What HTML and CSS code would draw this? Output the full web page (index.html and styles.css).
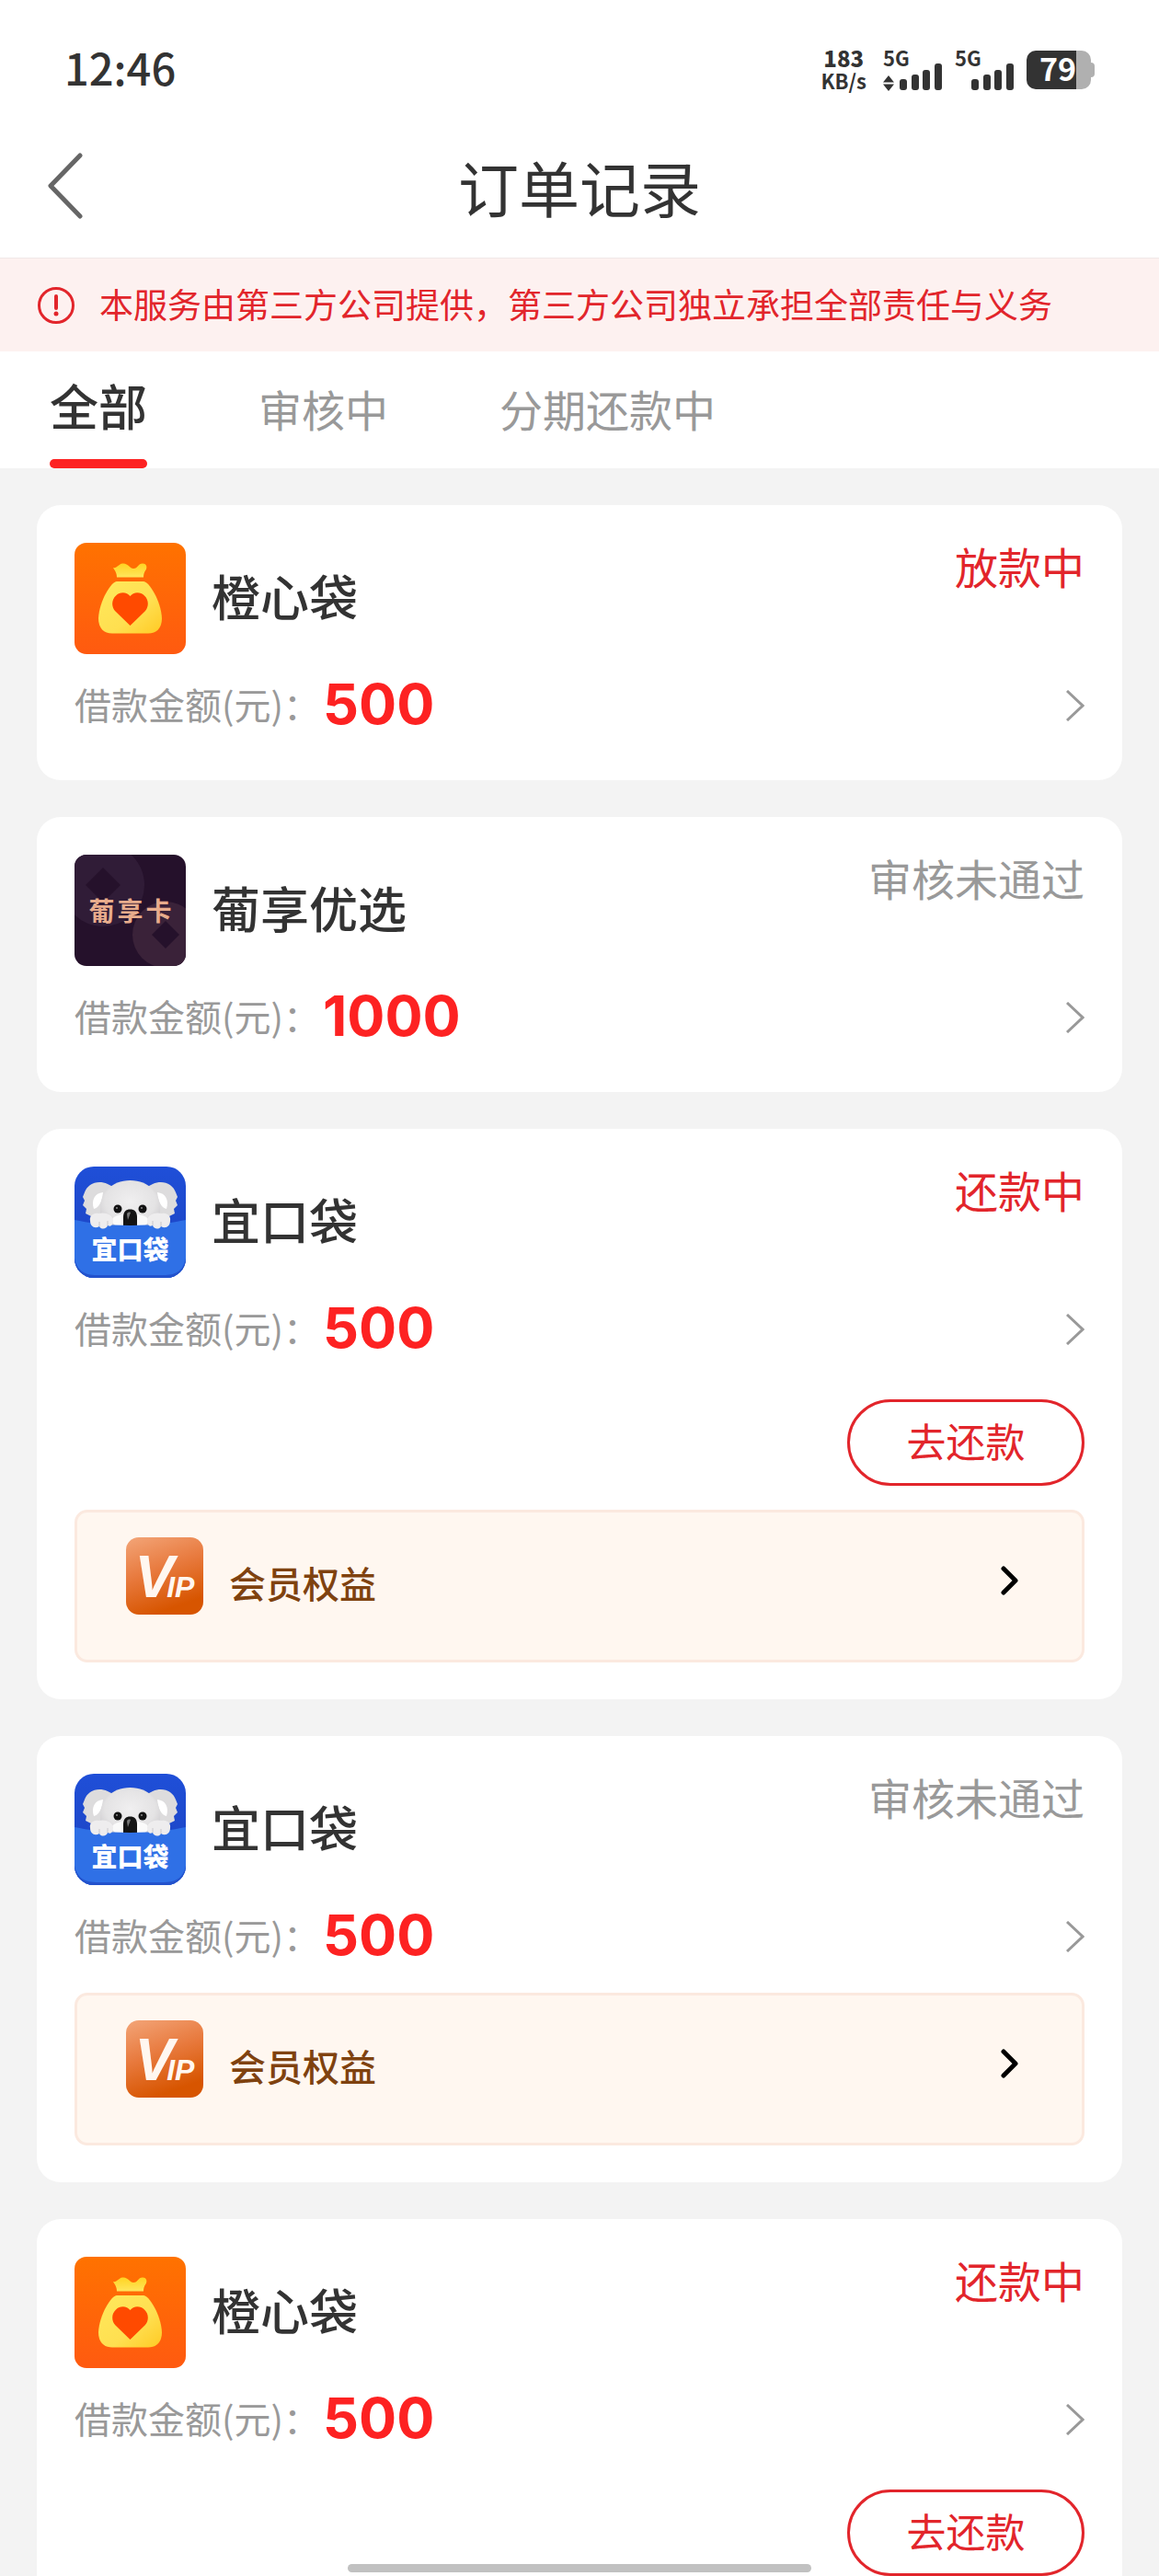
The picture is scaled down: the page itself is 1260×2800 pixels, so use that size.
FILE: index.html
```html
<!DOCTYPE html>
<html lang="zh-CN">
<head>
    <meta charset="UTF-8">
    <meta name="viewport" content="width=device-width, initial-scale=1.0">
    <title>订单记录</title>
    <link rel="stylesheet" href="styles.css">
</head>
<body>

<!-- 图标定义 -->
<svg class="defs" width="0" height="0" aria-hidden="true">
    <defs>
        <linearGradient id="orange-bg" x1="0" y1="0" x2="0" y2="1">
            <stop offset="0" stop-color="#ff7200"/>
            <stop offset="1" stop-color="#ff5a10"/>
        </linearGradient>
        <linearGradient id="bag" x1="0" y1="0" x2="1" y2="1">
            <stop offset="0" stop-color="#ffe95c"/>
            <stop offset="0.6" stop-color="#ffdf50"/>
            <stop offset="1" stop-color="#ffca24"/>
        </linearGradient>
        <linearGradient id="neck" x1="0" y1="0" x2="0" y2="1">
            <stop offset="0" stop-color="#ffd321"/>
            <stop offset="1" stop-color="#ffe65c"/>
        </linearGradient>
        <linearGradient id="vip-bg" x1="0" y1="0" x2="0.35" y2="1">
            <stop offset="0" stop-color="#f3a578"/>
            <stop offset="0.5" stop-color="#e87a3e"/>
            <stop offset="1" stop-color="#d75500"/>
        </linearGradient>
        <linearGradient id="koala-bg" x1="0" y1="0" x2="0" y2="1">
            <stop offset="0" stop-color="#1f4fd8"/>
            <stop offset="1" stop-color="#1c41bd"/>
        </linearGradient>
        <radialGradient id="fur" cx="0.5" cy="0.45" r="0.6">
            <stop offset="0" stop-color="#f0eff0"/>
            <stop offset="0.7" stop-color="#e4e3e4"/>
            <stop offset="1" stop-color="#cfcdd0"/>
        </radialGradient>
        <clipPath id="round"><rect width="121" height="121" rx="13"/></clipPath>
        <clipPath id="round-big"><rect width="121" height="121" rx="21"/></clipPath>
    </defs>

    <symbol id="logo-orange" viewBox="0 0 121 121">
        <rect width="121" height="121" rx="13" fill="url(#orange-bg)"/>
        <path d="M42 27c4 1 6-4 10-4.500c6-1 8 5.500 12 5.500c5 0 5-5.500 10-5.500c5 0 5 5 3.500 7c-2 3-2.500 5-2.500 8H46c0-5-2-7-4-10.500z" fill="url(#neck)"/>
        <path d="M46 42H75C81 42 94 63 95 82C95 93 89 98.500 80 98.500H41C32 98.500 26 93 26 82C27 63 40 42 46 42z" fill="url(#bag)"/>
        <path d="M60.500 58C57 53 49 53 45 57.500C40 62 40 70 44.500 74.500L60.500 90L76.500 74.500C81 70 81 62 76 57.500C72 53 64 53 60.500 58z" fill="#ff4a00"/>
    </symbol>

    <symbol id="logo-grape" viewBox="0 0 121 121">
        <g clip-path="url(#round)">
            <rect width="121" height="121" fill="#25112b"/>
            <circle cx="31" cy="33" r="45" fill="#301c37"/>
            <path d="M31 14L50 33L31 52L12 33z" fill="#25112b"/>
            <circle cx="99" cy="87" r="36" fill="#3a2239"/>
            <path d="M99 72L114 87L99 102L84 87z" fill="#25112b"/>
        </g>
    </symbol>

    <symbol id="logo-koala" viewBox="0 0 121 121">
        <g clip-path="url(#round-big)">
            <rect width="121" height="121" fill="url(#koala-bg)"/>
            <path d="M36 19C25 14 14 19 11 28L9 33L11 37L9 42L13 46L12 51L18 54L24 58H42V22z" fill="#dddcdd"/>
            <path d="M85 19C96 14 107 19 110 28L112 33L110 37L112 42L108 46L109 51L103 54L97 58H79V22z" fill="#dddcdd"/>
            <path d="M31 28C22 29 18 36 21 46C27 45 30 37 31 28zM90 28C99 29 103 36 100 46C94 45 91 37 90 28z" fill="#fff"/>
            <path d="M28 52C26 29 40 15 60.500 15C81 15 95 29 93 52C92 60 84 66 60.500 66C37 66 29 60 28 52z" fill="url(#fur)"/>
            <ellipse cx="60.500" cy="59" rx="20" ry="8" fill="#fafafa"/>
            <circle cx="47" cy="46" r="4.500" fill="#111"/>
            <circle cx="74" cy="46" r="4.500" fill="#111"/>
            <circle cx="46" cy="45" r="1" fill="#888"/>
            <circle cx="73" cy="45" r="1" fill="#888"/>
            <path d="M53 66V55C53 49 56 46.500 60.500 46.500C65 46.500 68 49 68 55V66z" fill="#141414"/>
            <path d="M57 52C57 50 59 49 61 50L58 58z" fill="#777"/>
            <path d="M0 58C14 61 34 64 60.500 64S107 61 121 58V121H0z" fill="#2f70e6"/>
            <path d="M0 100C3 114 12 118 24 118H97C109 118 118 114 121 100V121H0z" fill="#2352cc"/>
            <path d="M17 59C16 54 20 50 26 51C33 49 41 52 42 58C42 63 40 66 36 64C35 68 29 69 27 65C22 68 17 65 17 59z" fill="#eeedee"/>
            <path d="M104 59C105 54 101 50 95 51C88 49 80 52 79 58C79 63 81 66 85 64C86 68 92 69 94 65C99 68 104 65 104 59z" fill="#eeedee"/>
            <path d="M27 65V60M36 64V59M94 65V60M85 64V59" stroke="#cac8cb" stroke-width="1" fill="none"/>
        </g>
    </symbol>

    <symbol id="logo-vip" viewBox="0 0 84 84">
        <rect width="84" height="84" rx="14" fill="url(#vip-bg)"/>
    </symbol>

    <symbol id="arrow" viewBox="0 0 20 34">
        <path d="M1 1L18 17L1 33" fill="none" stroke="#999" stroke-width="3"/>
    </symbol>

    <symbol id="arrow-bold" viewBox="0 0 20 34">
        <path d="M3 4L16 17L3 30" fill="none" stroke="#000" stroke-width="5" stroke-linecap="round" stroke-linejoin="round"/>
    </symbol>

    <symbol id="bars" viewBox="0 0 46 30">
        <rect x="0" y="17" width="8" height="12" rx="3"/>
        <rect x="13" y="12" width="8" height="17" rx="3"/>
        <rect x="25" y="7" width="8" height="22" rx="3"/>
        <rect x="38" y="0" width="8" height="29" rx="3"/>
    </symbol>
</svg>

<div class="status-bar">
    <div class="time">12:46</div>
    <div class="status-icons">
        <div class="speed"><b>183</b><span>KB/s</span></div>
        <div class="signal">
            <span>5G</span>
            <div class="signal-row">
                <svg width="12" height="17" viewBox="0 0 12 17"><path d="M0 7.500L6 0L12 7.500zM0 9.500L6 17L12 9.500z"/></svg>
                <svg width="46" height="30"><use href="#bars"/></svg>
            </div>
        </div>
        <div class="signal">
            <span>5G</span>
            <div class="signal-row"><svg width="46" height="30"><use href="#bars"/></svg></div>
        </div>
        <div class="battery">79</div>
    </div>
</div>

<header class="nav">
    <button class="back" aria-label="返回">
        <svg width="40" height="72" viewBox="0 0 40 72"><path d="M36 3L4 36L36 69" fill="none" stroke="#666" stroke-width="5" stroke-linecap="round" stroke-linejoin="round"/></svg>
    </button>
    <h1>订单记录</h1>
</header>

<div class="notice">
    <svg width="42" height="42" viewBox="0 0 42 42"><circle cx="21" cy="21" r="18.500" fill="none" stroke="#e2252b" stroke-width="3"/><path d="M21 11V24" stroke="#e2252b" stroke-width="4" stroke-linecap="round"/><circle cx="21" cy="30" r="2.500" fill="#e2252b"/></svg>
    <span>本服务由第三方公司提供，第三方公司独立承担全部责任与义务</span>
</div>

<nav class="tabs">
    <a href="#" class="tab active">全部</a>
    <a href="#" class="tab">审核中</a>
    <a href="#" class="tab">分期还款中</a>
</nav>

<main class="order-list">
    <section class="card">
        <div class="card-head">
            <div class="logo"><svg><use href="#logo-orange"/></svg></div>
            <h2>橙心袋</h2>
            <span class="state red">放款中</span>
        </div>
        <div class="amount">
            <span>借款金额(元)：</span><strong>500</strong>
            <svg class="arrow"><use href="#arrow"/></svg>
        </div>
    </section>

    <section class="card">
        <div class="card-head">
            <div class="logo"><svg><use href="#logo-grape"/></svg><span class="grape-text"><i>葡</i><i>享</i><i>卡</i></span></div>
            <h2>葡享优选</h2>
            <span class="state">审核未通过</span>
        </div>
        <div class="amount">
            <span>借款金额(元)：</span><strong>1000</strong>
            <svg class="arrow"><use href="#arrow"/></svg>
        </div>
    </section>

    <section class="card">
        <div class="card-head">
            <div class="logo"><svg><use href="#logo-koala"/></svg><span class="koala-text">宜口袋</span></div>
            <h2>宜口袋</h2>
            <span class="state red">还款中</span>
        </div>
        <div class="amount">
            <span>借款金额(元)：</span><strong>500</strong>
            <svg class="arrow"><use href="#arrow"/></svg>
        </div>
        <button class="repay">去还款</button>
        <a href="#" class="vip">
            <div class="vip-logo"><svg><use href="#logo-vip"/></svg><span class="vip-text">V<small>IP</small></span></div>
            <span class="vip-title">会员权益</span>
            <svg class="arrow"><use href="#arrow-bold"/></svg>
        </a>
    </section>

    <section class="card">
        <div class="card-head">
            <div class="logo"><svg><use href="#logo-koala"/></svg><span class="koala-text">宜口袋</span></div>
            <h2>宜口袋</h2>
            <span class="state">审核未通过</span>
        </div>
        <div class="amount">
            <span>借款金额(元)：</span><strong>500</strong>
            <svg class="arrow"><use href="#arrow"/></svg>
        </div>
        <a href="#" class="vip">
            <div class="vip-logo"><svg><use href="#logo-vip"/></svg><span class="vip-text">V<small>IP</small></span></div>
            <span class="vip-title">会员权益</span>
            <svg class="arrow"><use href="#arrow-bold"/></svg>
        </a>
    </section>

    <section class="card">
        <div class="card-head">
            <div class="logo"><svg><use href="#logo-orange"/></svg></div>
            <h2>橙心袋</h2>
            <span class="state red">还款中</span>
        </div>
        <div class="amount">
            <span>借款金额(元)：</span><strong>500</strong>
            <svg class="arrow"><use href="#arrow"/></svg>
        </div>
        <button class="repay">去还款</button>
    </section>
</main>

<div class="home-bar"></div>

</body>
</html>
```
FILE: styles.css
```css
* {
    box-sizing: border-box;
}

body {
    margin: 0;
    height: 100vh;
    display: flex;
    flex-direction: column;
    overflow: hidden;
    background-color: #f3f3f3;
    color: #333;
    font-family: "Noto Sans CJK SC", sans-serif;
}

h1, h2 {
    margin: 0;
}

a {
    color: inherit;
    text-decoration: none;
}

button {
    font-family: inherit;
    background: none;
    border: none;
    padding: 0;
    cursor: pointer;
}

svg {
    display: block;
    flex-shrink: 0;
}

.defs {
    position: absolute;
}

/* 状态栏 */
.status-bar {
    display: flex;
    flex-shrink: 0;
    align-items: center;
    justify-content: space-between;
    height: 132px;
    padding: 20px 70px 0;
    background-color: #fff;
}

.time {
    padding-bottom: 8px;
    font-size: 47px;
    font-weight: 500;
}

.status-icons {
    display: flex;
    align-items: center;
    height: 42px;
    gap: 14px;
    font-weight: 700;
    fill: #333;
}

.speed {
    display: flex;
    flex-direction: column;
    align-items: center;
    margin-right: 4px;
    padding-bottom: 3px;
    font-size: 22px;
    line-height: 24px;
}

.speed b {
    font-size: 24px;
}

.signal {
    display: flex;
    flex-direction: column;
    justify-content: space-between;
    width: 64px;
    height: 43px;
    font-size: 22px;
    line-height: 14px;
}

.signal-row {
    display: flex;
    align-items: flex-end;
    justify-content: flex-end;
    gap: 6px;
}

.battery {
    position: relative;
    width: 70px;
    height: 42px;
    margin-right: 4px;
    padding-left: 14px;
    border-radius: 10px;
    background: linear-gradient(to right, #333 54px, #b0b0b0 54px);
    color: #fff;
    font-size: 34px;
    line-height: 38px;
}

.battery::after {
    content: "";
    position: absolute;
    right: -4px;
    top: 13px;
    width: 4px;
    height: 16px;
    border-radius: 0 4px 4px 0;
    background-color: #b0b0b0;
}

/* 标题栏 */
.nav {
    display: grid;
    flex-shrink: 0;
    grid-template-columns: 1fr auto 1fr;
    align-items: center;
    height: 148px;
    padding: 0 51px 8px;
    background-color: #fff;
}

.nav h1 {
    font-size: 66px;
    font-weight: 400;
    line-height: 96px;
}

.back {
    justify-self: start;
}

.notice {
    display: flex;
    flex-shrink: 0;
    align-items: center;
    gap: 26px;
    height: 102px;
    padding: 0 40px;
    border-top: 1px solid #f0e8e8;
    background-color: #fdf1f0;
    color: #e2252b;
    font-size: 37px;
}

.notice span {
    padding-bottom: 4px;
}

/* 标签 */
.tabs {
    display: flex;
    flex-shrink: 0;
    gap: 121px;
    height: 127px;
    padding: 0 54px;
    background-color: #fff;
}

.tab {
    color: #999;
    font-size: 47px;
    line-height: 124px;
}

.tab.active {
    display: flex;
    flex-direction: column;
    color: #333;
    font-size: 53px;
    font-weight: 500;
    line-height: 117px;
}

.tab.active::after {
    content: "";
    height: 10px;
    border-radius: 5px;
    background-color: #fd2222;
}

/* 订单 */
.order-list {
    flex: 1;
    min-height: 0;
    padding: 40px;
    overflow-y: auto;
    scrollbar-width: none;
}

.card {
    margin-bottom: 40px;
    padding: 41px 41px 40px;
    border-radius: 26px;
    background-color: #fff;
}

.card-head {
    display: flex;
    align-items: center;
    gap: 28px;
    height: 121px;
}

.logo {
    position: relative;
}

.logo svg {
    width: 121px;
    height: 121px;
}

.card-head h2 {
    padding-bottom: 8px;
    font-size: 53px;
    font-weight: 500;
}

.state {
    align-self: flex-start;
    margin-left: auto;
    color: #999;
    font-size: 47px;
    line-height: 49px;
}

.state.red {
    color: #e2252b;
}

.amount {
    display: flex;
    align-items: center;
    height: 82px;
    margin-top: 15px;
    color: #999;
    font-size: 40px;
    line-height: 78px;
}

.amount span,
.amount strong {
    padding-bottom: 4px;
}

.amount strong {
    margin-left: 3px;
    color: #fd2222;
    font-family: Inter, sans-serif;
    font-size: 61px;
}

.arrow {
    width: 20px;
    height: 34px;
    margin-left: auto;
}

.repay {
    display: block;
    width: 258px;
    height: 94px;
    margin: 35px 0 26px auto;
    padding-bottom: 6px;
    border: 3px solid #e2252b;
    border-radius: 47px;
    color: #e2252b;
    font-size: 43px;
}

.vip {
    display: flex;
    align-items: flex-start;
    gap: 28px;
    height: 166px;
    margin-top: 20px;
    padding: 27px 68px 0 53px;
    border: 3px solid #fbe9df;
    border-radius: 14px;
    background-color: #fff7f0;
    color: #7f420f;
    font-size: 40px;
    font-weight: 500;
}

.vip-title {
    padding-top: 7px;
    line-height: 84px;
}

.vip .arrow {
    margin-top: 30px;
}

.vip-logo {
    position: relative;
}

.vip-logo svg {
    width: 84px;
    height: 84px;
}

/* 图标内文字 */
.grape-text,
.koala-text,
.vip-text {
    position: absolute;
    left: 0;
    right: 0;
    display: flex;
    justify-content: center;
}

.grape-text {
    top: 41px;
    gap: 3px;
    color: #e8ac8c;
    font-size: 28px;
    font-weight: 700;
    line-height: 38px;
}

.grape-text i {
    font-style: normal;
}

.koala-text {
    top: 70px;
    color: #fff;
    font-size: 28px;
    font-weight: 900;
    line-height: 38px;
}

.vip-text {
    top: 8px;
    align-items: baseline;
    color: #fff7f0;
    font-family: "Liberation Sans", sans-serif;
    font-size: 64px;
    font-style: italic;
    font-weight: 700;
    line-height: 70px;
}

.vip-text small {
    margin-left: -8px;
    font-size: 32px;
}

.home-bar {
    position: fixed;
    left: 30%;
    right: 30%;
    bottom: 4px;
    height: 9px;
    border-radius: 5px;
    background-color: #c1c1c1;
}
```
